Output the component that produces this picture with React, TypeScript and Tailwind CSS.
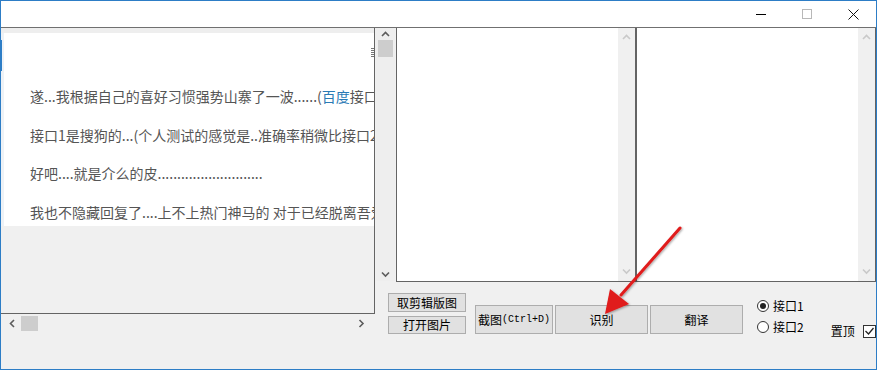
import React from "react";

const ui = "font-['Noto_Sans_CJK_SC','Liberation_Sans',sans-serif]";

function Chevron({ dir, color = "#5c5c5c" }: { dir: "up" | "down" | "left" | "right"; color?: string }) {
  const pts = {
    up: "1,5 4.5,1.5 8,5",
    down: "1,1.5 4.5,5 8,1.5",
    left: "5,1 1.5,4.5 5,8",
    right: "1.5,1 5,4.5 1.5,8",
  }[dir];
  const vertical = dir === "up" || dir === "down";
  return (
    <svg width={vertical ? 9 : 7} height={vertical ? 7 : 9} viewBox={vertical ? "0 0 9 7" : "0 0 7 9"}>
      <polyline points={pts} fill="none" stroke={color} strokeWidth="1.6" />
    </svg>
  );
}

function WinButton({ children, className }: { children: React.ReactNode; className: string }) {
  return (
    <div
      className={`flex items-center justify-center whitespace-nowrap bg-[#e1e1e1] border border-[#adadad] text-[12px] text-black leading-none ${className}`}
    >
      {children}
    </div>
  );
}

function TextBox() {
  return (
    <div className="flex flex-1 bg-white">
      <div className="flex-1" />
      <div className="w-[17px] bg-[#f0f0f0] flex flex-col items-center justify-between py-[6px]">
        <Chevron dir="up" color="#c9c9c9" />
        <Chevron dir="down" color="#c9c9c9" />
      </div>
    </div>
  );
}

export default function App() {
  const lines = [
    <>
      遂...我根据自己的喜好习惯强势山寨了一波......(<span className="text-[#2a7ab5]">百度</span>接口是
    </>,
    <>接口1是搜狗的...(个人测试的感觉是..准确率稍微比接口2</>,
    <>好吧....就是介么的皮...........................</>,
    <>我也不隐藏回复了....上不上热门神马的 对于已经脱离吾爱</>,
  ];

  return (
    <div className={`relative w-[877px] h-[370px] overflow-hidden border border-[#2d7dc6] bg-[#f0f0f0] flex flex-col ${ui}`}>
      {/* title bar */}
      <div className="h-[27px] shrink-0 bg-white border-b border-[#707070] flex justify-end">
        <div className="w-[46px] flex items-center justify-center">
          <div className="w-[10px] h-[1px] bg-black" />
        </div>
        <div className="w-[46px] flex items-center justify-center">
          <div className="w-[10px] h-[10px] border border-[#b8b8b8]" />
        </div>
        <div className="w-[46px] flex items-center justify-center">
          <svg width="11" height="11" viewBox="0 0 11 11">
            <path d="M0.5 0.5 L10.5 10.5 M10.5 0.5 L0.5 10.5" stroke="#111" strokeWidth="1" />
          </svg>
        </div>
      </div>

      <div className="flex flex-1">
        {/* left column */}
        <div className="w-[374px] flex flex-col">
          <div className="h-[286px] border-r border-b border-[#646464] flex flex-col">
            <div className="h-[5px] bg-[#eeeeee]" />
            <div className="h-[193px] flex">
              <div className="w-[3px] bg-[#eef2f6] flex flex-col">
                <div className="mt-[7px] h-[31px] w-[1px] bg-[#2d7dc6]" />
              </div>
              <div className="flex-1 bg-white overflow-hidden flex flex-col">
                <div className="flex justify-end pt-[15px]">
                  <div className="w-[3px] flex flex-col gap-[1px]">
                    <div className="h-[1px] bg-[#777]" />
                    <div className="h-[1px] bg-[#777]" />
                    <div className="h-[1px] bg-[#777]" />
                    <div className="h-[1px] bg-[#777]" />
                    <div className="h-[1px] bg-[#777]" />
                  </div>
                </div>
                <div className="flex flex-col gap-[16.7px] pt-[28px] pl-[26px] text-[14px] leading-[22px] text-[#555555] whitespace-nowrap">
                  {lines.map((l, i) => (
                    <p key={i}>{l}</p>
                  ))}
                </div>
              </div>
            </div>
          </div>
          <div className="h-[17px] mt-[1px] flex items-center">
            <div className="ml-[8px] w-[7px] flex">
              <Chevron dir="left" />
            </div>
            <div className="ml-[5px] w-[17px] h-[15px] bg-[#cdcdcd]" />
            <div className="flex-1" />
            <div className="mr-[10px] w-[7px] flex">
              <Chevron dir="right" />
            </div>
          </div>
        </div>

        {/* right column */}
        <div className="flex-1 flex flex-col pl-[1px]">
          <div className="h-[254px] flex">
            <div className="w-[19px] h-[253px] bg-[#eeeeee] flex flex-col items-center">
              <div className="mt-[3px]">
                <Chevron dir="up" />
              </div>
              <div className="mt-[2px] w-[15px] h-[17px] bg-[#cdcdcd]" />
              <div className="flex-1" />
              <div className="mb-[3px]">
                <Chevron dir="down" />
              </div>
            </div>
            <div className="w-[1px]" />
            <div className="w-[241px] flex border-l border-r-2 border-b border-[#646464]">
              <TextBox />
            </div>
            <div className="flex-1 flex border-r border-b border-[#646464]">
              <TextBox />
            </div>
          </div>

          {/* controls */}
          <div className="flex items-start">
            <div className="ml-[12px] mt-[11px] flex flex-col gap-[4px]">
              <WinButton className="w-[78px] h-[19px]">取剪辑版图</WinButton>
              <WinButton className="w-[78px] h-[18px]">打开图片</WinButton>
            </div>
            <div className="ml-[9px] mt-[23px] flex gap-[2px]">
              <WinButton className="w-[78px] h-[29px]">
                截图<span className="font-['Liberation_Mono',monospace] text-[10px]">(Ctrl+D)</span>
              </WinButton>
              <WinButton className="w-[93px] h-[29px]">识别</WinButton>
              <WinButton className="w-[93px] h-[29px]">翻译</WinButton>
            </div>
            <div className="ml-[14px] mt-[17px] flex flex-col gap-[8px] text-[12px] leading-[13px] text-black">
              <div className="flex items-center gap-[4px]">
                <div className="w-[12px] h-[12px] rounded-full border border-[#333] bg-white flex items-center justify-center">
                  <div className="w-[6px] h-[6px] rounded-full bg-[#222]" />
                </div>
                <span>接口1</span>
              </div>
              <div className="flex items-center gap-[4px]">
                <div className="w-[12px] h-[12px] rounded-full border border-[#333] bg-white" />
                <span>接口2</span>
              </div>
            </div>
            <div className="ml-[27px] mt-[42px] flex items-center gap-[8px] text-[12px] leading-[14px] text-black">
              <span>置顶</span>
              <div className="w-[13px] h-[13px] shrink-0 border border-[#333] bg-white flex items-center justify-center">
                <svg width="9" height="8" viewBox="0 0 9 8">
                  <polyline points="0.5,4 3.5,7 8.5,1" fill="none" stroke="#222" strokeWidth="1.3" />
                </svg>
              </div>
            </div>
          </div>
        </div>
      </div>

      {/* red annotation arrow */}
      <svg className="absolute left-0 top-0 pointer-events-none" width="877" height="370">
        <defs>
          <filter id="sh" x="-20%" y="-20%" width="140%" height="140%">
            <feDropShadow dx="1" dy="1" stdDeviation="1" floodColor="#000" floodOpacity="0.35" />
          </filter>
        </defs>
        <g filter="url(#sh)">
          <line x1="679" y1="227" x2="620" y2="294" stroke="#e01b1b" strokeWidth="3" strokeLinecap="round" />
          <polygon points="604,313 609,288 628,303" fill="#e01b1b" />
        </g>
      </svg>
    </div>
  );
}
